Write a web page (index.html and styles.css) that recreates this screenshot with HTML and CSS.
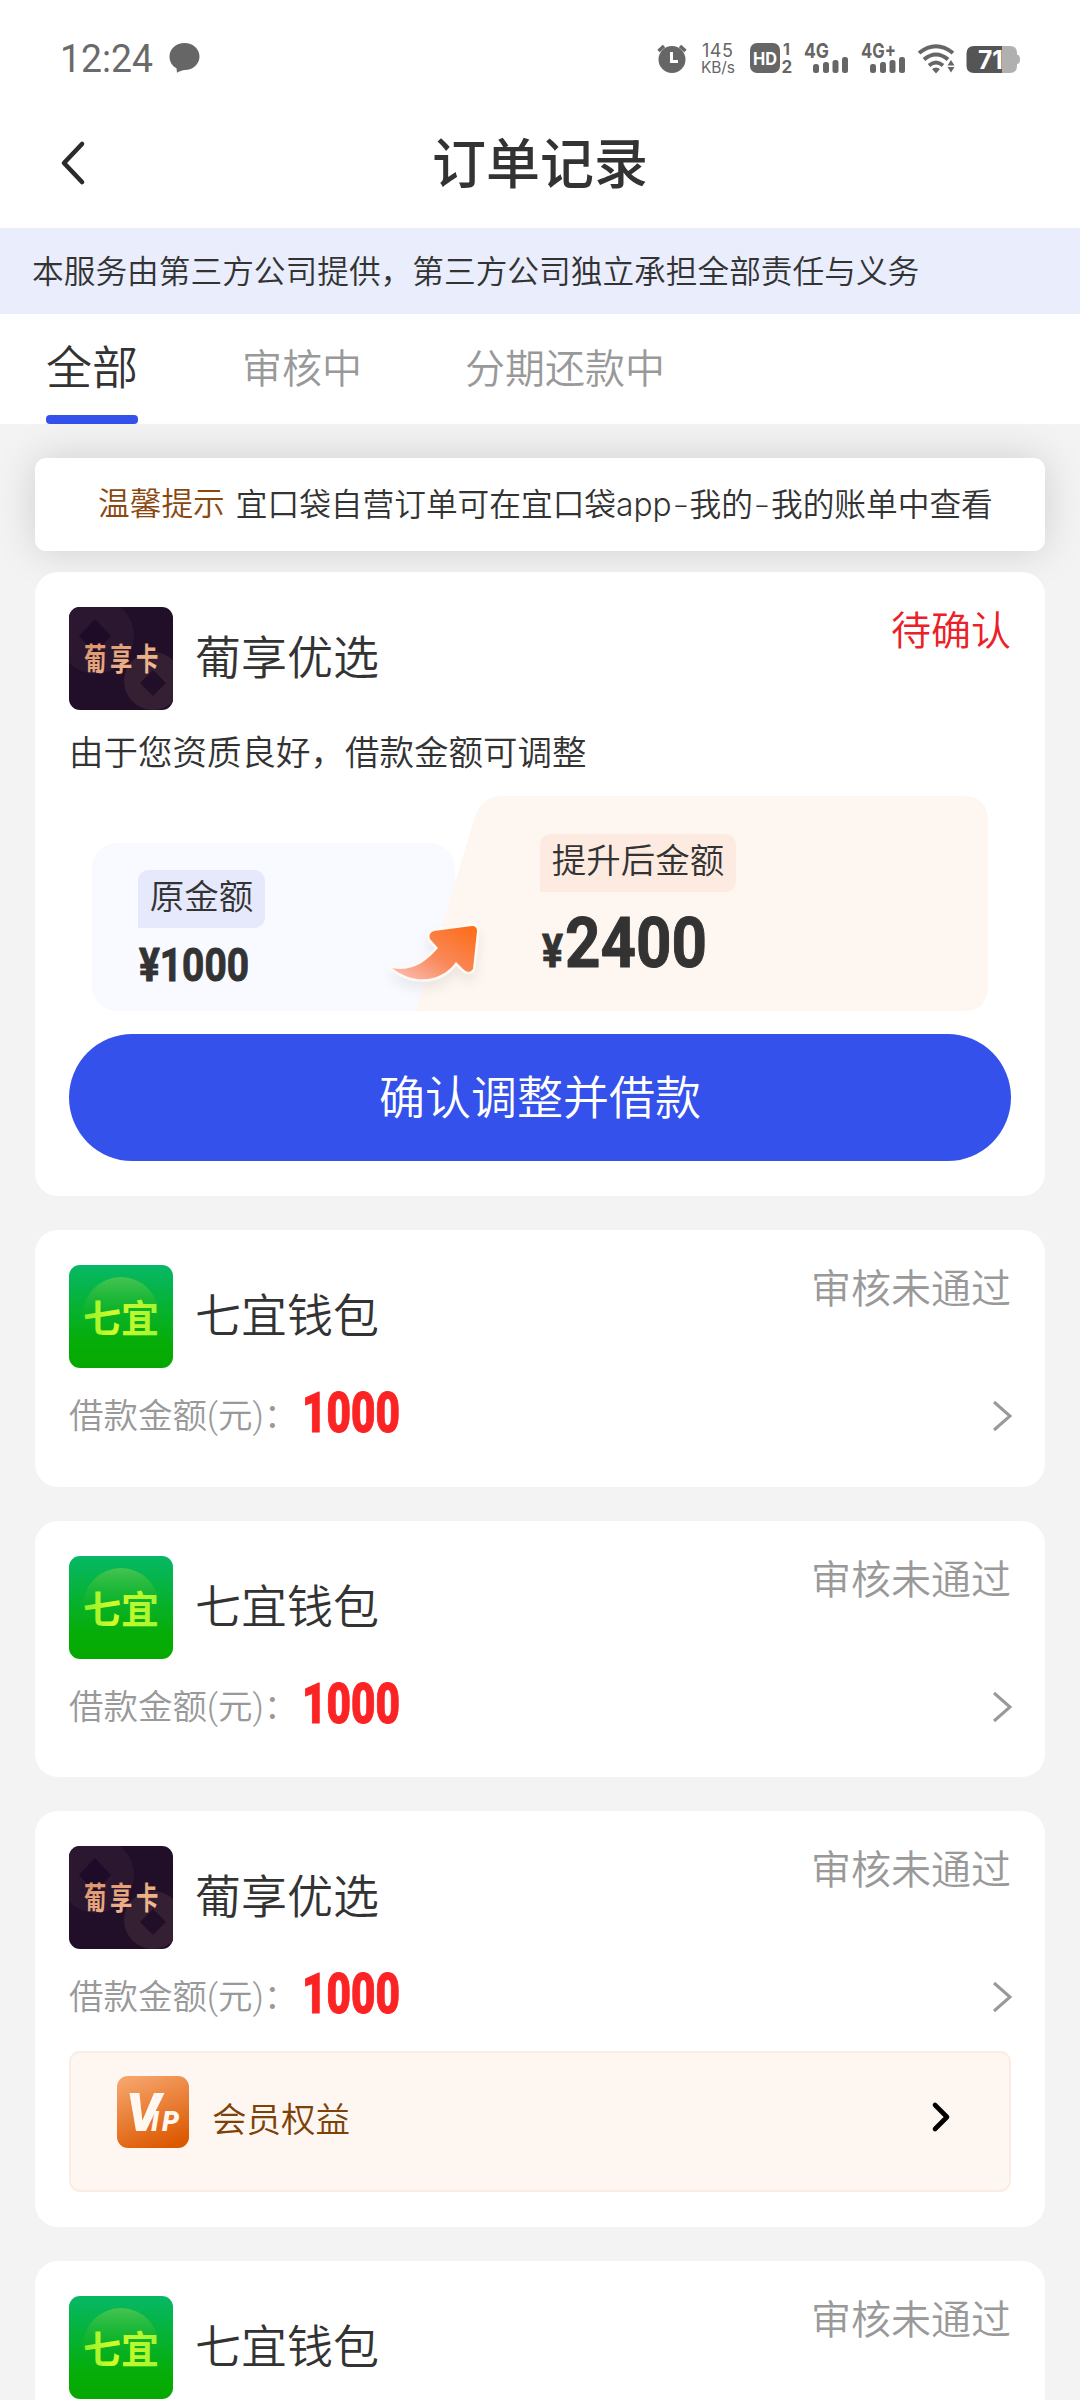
FILE: index.html
```html
<!DOCTYPE html>
<html lang="zh-CN">
<head>
<meta charset="utf-8">
<title>订单记录</title>
<link rel="stylesheet" href="styles.css">
</head>
<body>
<svg class="defs" width="0" height="0" aria-hidden="true">
  <defs>
    <linearGradient id="gGreen" x1="0" y1="0" x2="0" y2="1">
      <stop offset="0" stop-color="#06b866"/><stop offset=".75" stop-color="#06ad08"/><stop offset="1" stop-color="#05a800"/>
    </linearGradient>
    <linearGradient id="gDisc" x1="0" y1="0" x2="0" y2="1">
      <stop offset="0" stop-color="#46c452"/><stop offset=".7" stop-color="#06ad08" stop-opacity="0"/>
    </linearGradient>
    <linearGradient id="gLime" x1="0" y1="0" x2="1" y2="0">
      <stop offset="0" stop-color="#8df02a"/><stop offset=".4" stop-color="#d2fb2a"/><stop offset="1" stop-color="#a4f531"/>
    </linearGradient>
    <linearGradient id="gGold" x1="0" y1="0" x2="1" y2="1">
      <stop offset="0" stop-color="#d98e66"/><stop offset="1" stop-color="#f6c49c"/>
    </linearGradient>
    <linearGradient id="gArrow" x1="0" y1="1" x2="1" y2="0">
      <stop offset="0" stop-color="#fbc3bd"/><stop offset=".45" stop-color="#f98a5c"/><stop offset="1" stop-color="#fe6a14"/>
    </linearGradient>
    <linearGradient id="gVip" x1=".3" y1="0" x2=".7" y2="1">
      <stop offset="0" stop-color="#f5a268"/><stop offset="1" stop-color="#dc5800"/>
    </linearGradient>
    <symbol id="logo-pu" viewBox="0 0 104 103">
      <rect width="104" height="103" fill="#210e28"/>
      <circle cx="27" cy="29" r="38" fill="#2b1730"/>
      <path d="M26 12 42 29 26 46 10 29Z" fill="#1e0b27"/>
      <circle cx="84" cy="74" r="29" fill="#352033"/>
      <path d="M84 63 97 76 84 89 71 76Z" fill="#210e28"/>
      <text class="logo-pu-text" x="21" y="63" transform="scale(.72 1)" fill="url(#gGold)">葡享卡</text>
    </symbol>
    <symbol id="logo-qi" viewBox="0 0 104 103">
      <rect width="104" height="103" fill="url(#gGreen)"/>
      <circle cx="52" cy="50" r="38" fill="url(#gDisc)"/>
      <text class="logo-qi-text" x="14" y="67" textLength="76" fill="url(#gLime)">七宜</text>
    </symbol>
  </defs>
</svg>

<header class="statusbar">
  <div class="status-left">
    <svg width="92" height="44" viewBox="0 0 92 44"><text class="clock" x="-1" y="35" textLength="93" lengthAdjust="spacingAndGlyphs">12:24</text></svg>
    <svg class="bubble" width="31" height="30" viewBox="0 0 31 30"><path d="M15.500 0C24 0 30.500 6 30.500 13.500S24 27 16 27C13.500 27 10 28.500 8 29.800L7.500 25.200C3 23 .500 18.500 .500 13.500C.500 6 7 0 15.500 0Z" fill="#666"/></svg>
  </div>
  <svg class="status-right" width="364" height="34" viewBox="656 41 364 34" fill="#666">
    <circle cx="672" cy="59.500" r="13.500"/>
    <path d="M658.500 51 664 46M685.500 51 680 46" stroke="#666" stroke-width="3.500" fill="none"/>
    <path d="M671.500 52V61.500H678" stroke="#fff" stroke-width="3" fill="none"/>
    <text class="st" x="702" y="56.500" font-size="18" textLength="31">145</text>
    <text class="st" x="701" y="72.500" font-size="15.500" textLength="34">KB/s</text>
    <rect x="750" y="43" width="30" height="30" rx="7"/>
    <text class="stb" x="753" y="65" font-size="18" fill="#fff" textLength="24" lengthAdjust="spacingAndGlyphs">HD</text>
    <text class="stb" x="783" y="55" font-size="16">1</text>
    <text class="stb" x="781.500" y="72.500" font-size="17">2</text>
    <text class="stb" x="804" y="58" font-size="20.500" textLength="25" lengthAdjust="spacingAndGlyphs">4G</text>
    <rect x="813" y="64" width="6" height="9" rx="2.500"/><rect x="823" y="62" width="6" height="11" rx="2.500"/><rect x="832.500" y="60" width="6" height="13" rx="2.500"/><rect x="842" y="57" width="6" height="16" rx="2.500"/>
    <text class="stb" x="861" y="58" font-size="20.500" textLength="35" lengthAdjust="spacingAndGlyphs">4G+</text>
    <rect x="870" y="64" width="6" height="9" rx="2.500"/><rect x="880" y="62" width="6" height="11" rx="2.500"/><rect x="889.500" y="60" width="6" height="13" rx="2.500"/><rect x="899" y="57" width="6" height="16" rx="2.500"/>
    <g fill="none" stroke="#666" stroke-width="4"><path d="M919 53Q936 39.500 953 53"/><path d="M924 59.500Q936 49.500 948 59.500"/><path d="M929 65.500Q936 59.500 943 65.500"/></g>
    <path d="M932 69Q936 66 940 69L936 73.500ZM951 60 954.500 65.500H947.500ZM951 72.500 947.500 67H954.500Z"/>
    <path d="M1002 46H1010Q1017 46 1017 53V54.500Q1020 55 1020 59.500T1017 64V66Q1017 73 1010 73H1002Z" fill="#b0b0b0"/>
    <path d="M1002 46V73H974Q966.500 73 966.500 65.500V53.500Q966.500 46 974 46Z" fill="#555"/>
    <text class="stb" x="978" y="69" font-size="25" fill="#fff" textLength="25" lengthAdjust="spacingAndGlyphs">71</text>
  </svg>
</header>

<nav class="titlebar">
  <svg class="back" width="26" height="44" viewBox="0 0 26 44"><path d="M22 3 4 22 22 41" fill="none" stroke="#2b2b2b" stroke-width="4.600" stroke-linecap="round" stroke-linejoin="round"/></svg>
  <h1>订单记录</h1>
</nav>

<div class="notice">本服务由第三方公司提供，第三方公司独立承担全部责任与义务</div>

<div class="tabs">
  <span class="tab active">全部</span>
  <span class="tab">审核中</span>
  <span class="tab">分期还款中</span>
</div>

<main>
  <div class="tip"><span class="tip-label">温馨提示</span><span>宜口袋自营订单可在宜口袋<span class="latin">app</span><i class="dash">-</i>我的<i class="dash">-</i>我的账单中查看</span></div>

  <section class="card offer">
    <div class="head">
      <svg class="logo"><use href="#logo-pu"/></svg>
      <span class="name">葡享优选</span>
      <span class="status red">待确认</span>
    </div>
    <p class="desc">由于您资质良好，借款金额可调整</p>
    <div class="raise">
      <div class="before">
        <span class="tag">原金额</span>
        <svg class="money" width="114" height="36" viewBox="0 0 114 36"><text class="din" x="1" y="33.500" font-size="46" textLength="110" lengthAdjust="spacingAndGlyphs">¥1000</text></svg>
      </div>
      <div class="after">
        <svg class="after-bg" width="572" height="215" viewBox="0 0 572 215"><path d="M86 0H547Q572 0 572 25V190Q572 215 547 215H0L58 24Q65 0 86 0Z" fill="#fef7f1"/></svg>
        <span class="tag warm">提升后金额</span>
        <svg class="money big" width="170" height="54" viewBox="0 0 170 54"><text class="din" x="2" y="51" font-size="47" textLength="21" lengthAdjust="spacingAndGlyphs">¥</text><text class="din" x="25" y="51" font-size="70" textLength="142" lengthAdjust="spacingAndGlyphs">2400</text></svg>
      </div>
      <svg class="arrow" width="100" height="80" viewBox="0 0 100 80"><path d="M10 50C30 54 44 44 56 30L48 21Q46 15 52 13L90 8Q95 8 95 13L91 51Q87 57 81 51L74 44C58 66 30 66 10 50Z" fill="url(#gArrow)" stroke="#fff9f4" stroke-width="5" stroke-linejoin="round" paint-order="stroke"/></svg>
    </div>
    <button class="primary">确认调整并借款</button>
  </section>

  <section class="card">
    <div class="head">
      <svg class="logo"><use href="#logo-qi"/></svg>
      <span class="name">七宜钱包</span>
      <span class="status">审核未通过</span>
    </div>
    <div class="amount"><span>借款金额(元)：</span><svg width="102" height="42" viewBox="0 0 102 42"><text class="din sum" x="1" y="40" font-size="55" textLength="98" lengthAdjust="spacingAndGlyphs">1000</text></svg><svg class="chev" width="20" height="32" viewBox="0 0 20 32"><path d="M2 2 18 16 2 30" fill="none" stroke="#999" stroke-width="3"/></svg></div>
  </section>

  <section class="card">
    <div class="head">
      <svg class="logo"><use href="#logo-qi"/></svg>
      <span class="name">七宜钱包</span>
      <span class="status">审核未通过</span>
    </div>
    <div class="amount"><span>借款金额(元)：</span><svg width="102" height="42" viewBox="0 0 102 42"><text class="din sum" x="1" y="40" font-size="55" textLength="98" lengthAdjust="spacingAndGlyphs">1000</text></svg><svg class="chev" width="20" height="32" viewBox="0 0 20 32"><path d="M2 2 18 16 2 30" fill="none" stroke="#999" stroke-width="3"/></svg></div>
  </section>

  <section class="card member">
    <div class="head">
      <svg class="logo"><use href="#logo-pu"/></svg>
      <span class="name">葡享优选</span>
      <span class="status">审核未通过</span>
    </div>
    <div class="amount"><span>借款金额(元)：</span><svg width="102" height="42" viewBox="0 0 102 42"><text class="din sum" x="1" y="40" font-size="55" textLength="98" lengthAdjust="spacingAndGlyphs">1000</text></svg><svg class="chev" width="20" height="32" viewBox="0 0 20 32"><path d="M2 2 18 16 2 30" fill="none" stroke="#999" stroke-width="3"/></svg></div>
    <div class="vip">
      <svg class="vip-icon" width="72" height="72" viewBox="0 0 72 72"><rect width="72" height="72" rx="11" fill="url(#gVip)"/><text class="vip-text" y="55"><tspan x="9" class="vip-v">V</tspan><tspan x="34" class="vip-ip">I</tspan><tspan x="45" class="vip-ip">P</tspan></text></svg>
      <span>会员权益</span>
      <svg class="vip-chev" width="20" height="32" viewBox="0 0 20 32"><path d="M4 4 16 16 4 28" fill="none" stroke="#000" stroke-width="4.600" stroke-linecap="round" stroke-linejoin="round"/></svg>
    </div>
  </section>

  <section class="card last">
    <div class="head">
      <svg class="logo"><use href="#logo-qi"/></svg>
      <span class="name">七宜钱包</span>
      <span class="status">审核未通过</span>
    </div>
  </section>
</main>
</body>
</html>
```
FILE: styles.css
```css
* { box-sizing: border-box; }
html, body { margin: 0; height: 2400px; }
body {
  width: 1080px;
  background: #f3f3f3;
  color: #333;
  font-family: Roboto, "Noto Sans CJK SC", sans-serif;
  font-weight: 350;
  display: flex;
  flex-direction: column;
}
.defs { position: absolute; }
svg { display: block; flex: none; overflow: visible; }
h1, p { margin: 0; }

.statusbar {
  height: 100px;
  padding: 37px 60px 0 61px;
  background: #fff;
  display: flex;
  justify-content: space-between;
}
.status-left { display: flex; gap: 16px; }
.clock { font: 400 38px Roboto, sans-serif; fill: #6a6a6a; }
.bubble { margin-top: 6px; }
.status-right { margin-top: 4px; }
.st { font-family: Inter, sans-serif; font-weight: 400; }
.stb { font-family: Inter, sans-serif; font-weight: 700; }

.titlebar {
  height: 128px;
  background: #fff;
  display: grid;
  grid-template-columns: 60px 1fr 60px;
}
.back { margin: 41px 0 0 60px; }
h1 {
  font-size: 54px;
  font-weight: 500;
  line-height: 80px;
  text-align: center;
  margin-top: 26px;
}

.notice {
  height: 86px;
  line-height: 90px;
  padding-left: 32px;
  background: #e9edfc;
  font-size: 31.7px;
  white-space: nowrap;
}

.tabs {
  height: 110px;
  padding-left: 46px;
  background: #fff;
  display: flex;
  color: #999;
  font-size: 40px;
  line-height: 112px;
}
.tab:nth-child(2) { margin-left: 104px; }
.tab:nth-child(3) { margin-left: 103px; }
.tab.active {
  height: 110px;
  color: #333;
  font-size: 46px;
  line-height: 108px;
  display: flex;
  flex-direction: column;
}
.tab.active::after {
  content: "";
  height: 9px;
  margin-top: -7px;
  border-radius: 4px;
  background: #3451eb;
}

main { flex: 1; min-height: 0; padding: 34px 35px 0; display: flex; flex-direction: column; }
.tip {
  height: 93px;
  flex: none;
  margin-bottom: 21px;
  padding-left: 63px;
  border-radius: 11px;
  background: #fff;
  box-shadow: 0 0 40px rgba(0, 0, 0, .15);
  display: flex;
  gap: 11px;
  font-size: 31.7px;
  line-height: 94px;
  white-space: nowrap;
}
.tip-label { color: #884810; }
.latin { font-family: Inter, sans-serif; }
.dash { display: inline-block; width: 18px; text-align: center; font-style: normal; transform: scaleX(1.5); }

.card {
  position: relative;
  margin-bottom: 34px;
  padding: 35px 34px;
  height: 256.6px;
  flex: none;
  border-radius: 23px;
  background: #fff;
}
.card.offer { height: 624px; }
.card.member { height: 415.5px; }
.card.last { flex: 1; height: auto; min-height: 0; margin-bottom: 0; padding-bottom: 0; border-radius: 23px 23px 0 0; }
.head { display: flex; height: 103px; }
.logo { width: 104px; height: 103px; border-radius: 11px; overflow: hidden; }
.logo-pu-text { font: 700 31px "Noto Sans CJK SC", sans-serif; letter-spacing: 5px; }
.logo-qi-text { font: 700 38px "Noto Sans CJK SC", sans-serif; }
.name { margin-left: 22px; font-size: 46px; line-height: 103px; }
.status { margin: -5px 0 0 auto; font-size: 40px; line-height: 60px; color: #999; }
.status.red { color: #ec2027; }

.desc { margin-top: 19px; font-size: 34.5px; line-height: 48px; white-space: nowrap; }
.raise { position: relative; margin: 19px 0 23px 23px; height: 215px; display: flex; }
.before {
  width: 363px;
  height: 168px;
  margin-top: 47px;
  padding: 27px 0 0 46px;
  border-radius: 25px;
  background: #f9faff;
}
.tag {
  display: block;
  width: 127px;
  height: 58px;
  border-radius: 11px 11px 11px 0;
  background: #e6e8fb;
  font-size: 34.5px;
  line-height: 54px;
  text-align: center;
}
.tag.warm { width: 196px; background: #fdebe2; }
.money { margin-top: 19px; }
.money.big { margin-top: 24px; }
.din { font-family: Roboto, sans-serif; font-weight: 700; fill: #333; stroke: #333; stroke-width: 1; stroke-linejoin: round; }
.after { position: relative; margin-left: -39px; width: 572px; padding: 38px 0 0 124px; }
.after-bg { position: absolute; left: 0; top: 0; }
.after .tag, .after .money { position: relative; }
.arrow { position: absolute; left: 290px; top: 122px; filter: drop-shadow(0 7px 6px rgba(0, 0, 0, .07)); }
.primary {
  display: block;
  width: 942px;
  height: 127px;
  padding: 0 0 8px;
  border: 0;
  border-radius: 64px;
  background: #3451eb;
  color: #fff;
  font: inherit;
  font-size: 46px;
}

.amount { display: flex; height: 92px; padding-top: 24px; font-size: 34.5px; color: #999; line-height: 48px; }
.amount span { width: 232px; white-space: nowrap; }
.din.sum { fill: #fb2323; font-weight: 900; stroke: #fb2323; }
.chev { margin: 8px -1px 0 auto; }
.vip {
  height: 141px;
  margin-top: 10px;
  padding: 23px 58px 0 46px;
  border: 2px solid #fbece3;
  border-radius: 11px;
  background: #fef7f1;
  display: flex;
  color: #7c4208;
  font-size: 34.5px;
}
.vip span { margin-left: 23px; line-height: 89px; }
.vip-chev { margin: 25px 0 0 auto; }
.vip-text { font-family: Roboto, sans-serif; font-style: italic; font-weight: 900; fill: #fff8f0; }
.vip-v { font-size: 54px; }
.vip-ip { font-size: 27px; }
```
